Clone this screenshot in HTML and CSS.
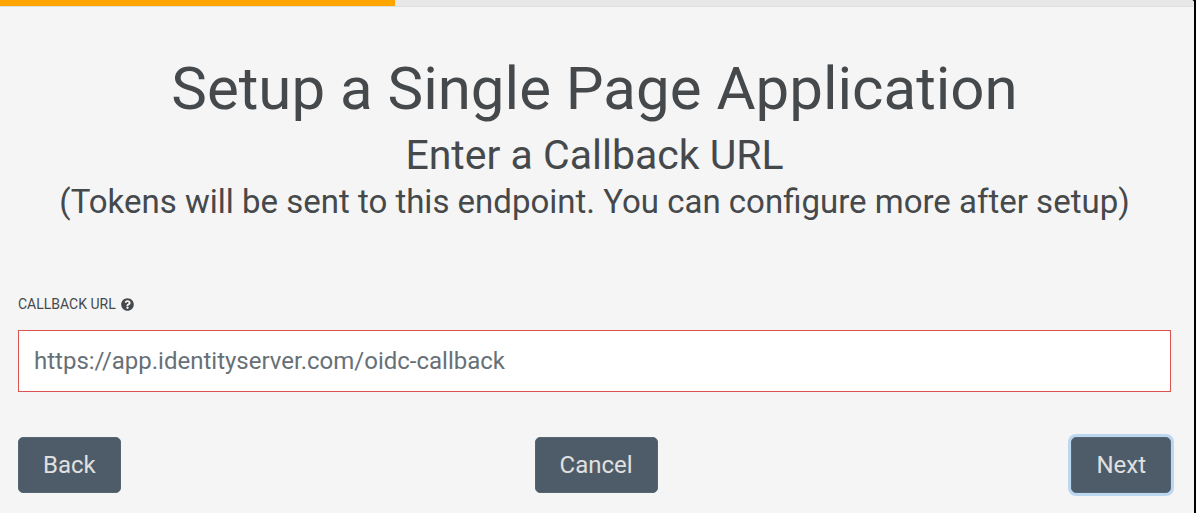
FILE: index.html
```html
<!DOCTYPE html>
<html lang="en">
<head>
<meta charset="utf-8">
<title>Setup a Single Page Application</title>
<link rel="stylesheet" href="styles.css">
</head>
<body>
<main class="wizard">
  <div class="progress"><div class="progress-bar"></div></div>
  <form class="content">
    <header class="heading">
      <h1>Setup a Single Page Application</h1>
      <h2>Enter a Callback URL</h2>
      <p>(Tokens will be sent to this endpoint. You can configure more after setup)</p>
    </header>
    <label class="label" for="callback">Callback URL
      <svg class="help" viewBox="0 0 512 512" aria-hidden="true"><path fill="currentColor" d="M504 256c0 137-111 248-248 248S8 393 8 256 119 8 256 8s248 111 248 248zM262.700 90c-54.500 0-89.300 23-116.500 63.800-3.500 5.300-2.400 12.400 2.700 16.300l34.700 26.300c5.200 3.900 12.600 3 16.700-2.100 17.900-22.700 30.100-35.800 57.300-35.800 20.400 0 45.700 13.100 45.700 33 0 15-12.400 22.700-32.500 34C247.100 238.500 216 254.900 216 296v4c0 6.600 5.400 12 12 12h56c6.600 0 12-5.400 12-12v-1.300c0-28.500 83.200-29.600 83.200-106.700 0-58-60.200-102-116.500-102zM256 338c-25.400 0-46 20.600-46 46s20.600 46 46 46 46-20.600 46-46-20.600-46-46-46z"/></svg>
    </label>
    <input class="field" id="callback" type="text" placeholder="https://app.identityserver.com/oidc-callback">
    <div class="actions">
      <button class="button" type="button">Back</button>
      <button class="button" type="button">Cancel</button>
      <button class="button button-active" type="button">Next</button>
    </div>
  </form>
</main>
</body>
</html>
```
FILE: styles.css
```css
* { box-sizing: border-box; }
body {
  margin: 0;
  background: #000;
  color: #45494c;
  font-family: Roboto, sans-serif;
}
.wizard {
  min-height: 100vh;
  margin-right: 2px;
  background: #f5f5f5;
  border-top-right-radius: 3px;
  overflow: hidden;
}
.progress { height: 7px; background: #e8e8e8; border-bottom: 1px solid #dfdfdf; }
.progress-bar { width: 33.1%; height: 6px; background: #ffa500; }
.content { padding: 46px 23px 20px 18px; }
.heading { text-align: center; }
h1, h2, p { margin: 0; font-weight: 400; }
h1 { font-size: 60px; line-height: 72px; }
h2 { margin-top: 5px; font-size: 41px; line-height: 50px; }
p { font-size: 33px; line-height: 44px; }
.label {
  display: flex;
  align-items: center;
  gap: 5px;
  margin-top: 72px;
  font-size: 14px;
  line-height: 16px;
  text-transform: uppercase;
}
.help { width: 13px; height: 13px; }
.field {
  display: block;
  width: 100%;
  height: 62px;
  margin-top: 18px;
  padding: 0 15px;
  border: 1px solid #d9534f;
  background: #fff;
  font: 24px Roboto, sans-serif;
}
.field::placeholder { color: #677077; opacity: 1; }
.actions { display: flex; justify-content: space-between; margin-top: 45px; }
.button {
  height: 56px;
  padding: 0 24px;
  border: 1px solid #566673;
  border-radius: 5px;
  background: #4d5c68;
  color: #e0e0e0;
  font: 24px Roboto, sans-serif;
}
.button-active { box-shadow: 0 0 0 3px #bcd7f0; }
```
